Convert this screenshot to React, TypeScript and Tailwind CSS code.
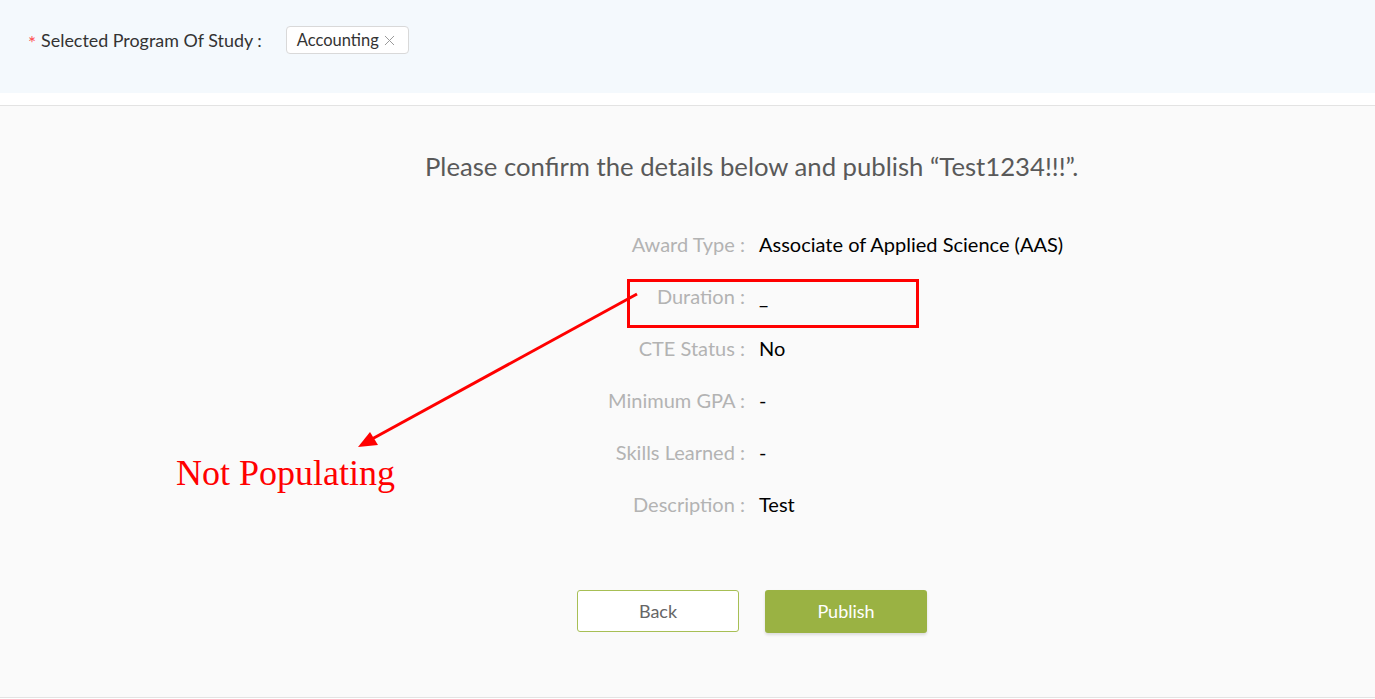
import { X } from "lucide-react";

const rows = [
  { label: "Award Type", value: "Associate of Applied Science (AAS)" },
  { label: "Duration", value: "_" },
  { label: "CTE Status", value: "No" },
  { label: "Minimum GPA", value: "-" },
  { label: "Skills Learned", value: "-" },
  { label: "Description", value: "Test" },
];

export default function App() {
  return (
    <div className="relative w-[1375px] h-[699px] overflow-hidden bg-white font-['Lato',sans-serif]">
      {/* Program of study header */}
      <div className="h-[93px] bg-[#f4f9fd] flex items-start pl-[28px] pt-[26px]">
        <div className="flex items-center h-[28px]">
          <span className="text-[#ff4d4f] text-[19px] mr-[5px] mt-[6px]">*</span>
          <span className="text-[17.9px] text-[#333]">Selected Program Of Study :</span>
          <span className="ml-[24px] h-[28px] pl-[10px] pr-[10px] flex items-center gap-[2px] bg-white border border-[#d9d9d9] rounded-[4px] text-[16.5px] text-[#333]">
            Accounting
            <X className="w-[17px] h-[17px] text-[#999]" strokeWidth={1.4} />
          </span>
        </div>
      </div>
      <div className="h-[13px] bg-white border-b border-[#e3e3e3]" />

      {/* Confirmation */}
      <div className="bg-[#fafafa] h-[592px] border-b border-[#e3e3e3] flex flex-col">
        <div className="pt-[44px] pl-[425px] text-[25.7px] text-[#595959] leading-[32px]">
          Please confirm the details below and publish “Test1234!!!”.
        </div>
        <div className="mt-[48px] flex flex-col gap-[24px]">
          {rows.map((r) => (
            <div key={r.label} className="flex items-center h-[28px] text-[20px]">
              <div className="w-[747px] text-right text-[#b3b3b3] pr-[2px]">{r.label} :</div>
              <div className="pl-[12px] text-black">{r.value}</div>
            </div>
          ))}
        </div>
        <div className="mt-[72px] flex pl-[577px] gap-[26px]">
          <button className="w-[162px] h-[42px] bg-white border border-[#a7bf55] rounded-[3px] text-[18px] text-[#666]">
            Back
          </button>
          <button className="w-[162px] h-[43px] bg-[#9ab243] rounded-[3px] text-[18px] text-white shadow-[0_2px_3px_rgba(0,0,0,0.12)]">
            Publish
          </button>
        </div>
      </div>

      {/* Annotation overlay */}
      <div className="absolute left-[627px] top-[279px] w-[292px] h-[49px] border-[3px] border-[#ff0000]" />
      <svg className="absolute left-0 top-0" width="1375" height="699">
        <line x1="637" y1="294" x2="372" y2="439" stroke="#ff0000" strokeWidth="3" />
        <polygon points="358,447 370,432 378,445" fill="#ff0000" />
      </svg>
      <div className="absolute left-[176px] top-[449px] text-[36px] leading-[48px] text-[#ff0000] font-['Liberation_Serif',serif]">
        Not Populating
      </div>
    </div>
  );
}
